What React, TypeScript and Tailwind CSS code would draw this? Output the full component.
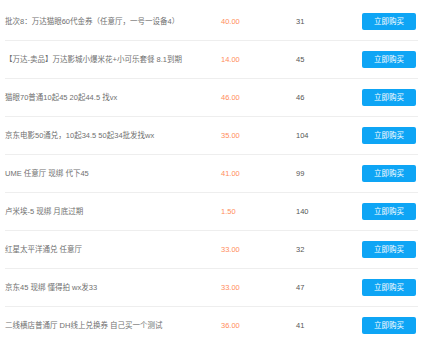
const items = [
  { name: "批次8：万达猫眼60代金券（任意厅，一号一设备4）", price: "40.00", stock: "31" },
  { name: "【万达-卖品】万达影城小爆米花+小可乐套餐 8.1到期", price: "14.00", stock: "45" },
  { name: "猫眼70普通10起45 20起44.5 找vx", price: "46.00", stock: "46" },
  { name: "京东电影50通兑，10起34.5 50起34批发找wx", price: "35.00", stock: "104" },
  { name: "UME 任意厅 现绑 代下45", price: "41.00", stock: "99" },
  { name: "卢米埃-5 现绑 月底过期", price: "1.50", stock: "140" },
  { name: "红星太平洋通兑 任意厅", price: "33.00", stock: "32" },
  { name: "京东45 现绑 懂得拍 wx发33", price: "33.00", stock: "47" },
  { name: "二线横店普通厅 DH线上兑换券 自己买一个测试", price: "36.00", stock: "41" },
];

const App = () => {
  return (
    <div className="w-[425px] h-[340px] overflow-hidden bg-white pt-[3px] pl-[5px] font-['Liberation_Sans','Noto_Sans_CJK_SC',sans-serif]">
      <div className="w-[413px]">
        {items.map((item, i) => (
          <div key={i} className="flex items-center h-[38px] border-b border-[#eeeeee] text-[7.5px]">
            <div className="w-[216px] text-[#707070] whitespace-nowrap">{item.name}</div>
            <div className="w-[75px] text-[#ff8d5c]">{item.price}</div>
            <div className="w-[66px] text-[#555555]">{item.stock}</div>
            <button className="w-[54px] h-[17px] rounded-[2px] bg-[#0ea5f5] text-white text-[7.5px] leading-none">
              立即购买
            </button>
          </div>
        ))}
      </div>
    </div>
  );
};

export default App;
